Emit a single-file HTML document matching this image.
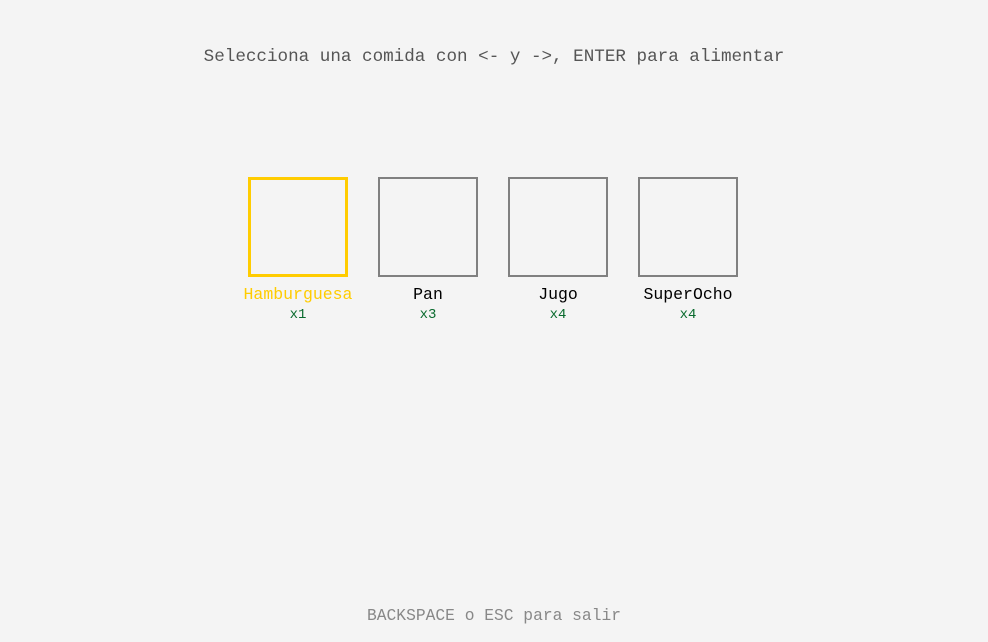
<!DOCTYPE html>
<html><head><style>
body{margin:0;width:988px;height:642px;background:#f4f4f4;position:relative;font-family:"Liberation Mono",monospace;overflow:hidden}
.t{position:absolute;left:0;width:988px;text-align:center;white-space:nowrap}
.box{position:absolute;top:177px;width:100px;height:100px;box-sizing:border-box;border:2px solid #808080}
.lab{position:absolute;top:285px;width:160px;text-align:center;font-size:16.5px;color:#000}
.cnt{position:absolute;top:307px;width:160px;text-align:center;font-size:14px;color:#0a6b2e}
</style></head><body>
<div class="t" style="top:47px;font-size:17.6px;color:#555">Selecciona una comida con &lt;- y -&gt;, ENTER para alimentar</div>
<div class="box" style="left:248px;border:3px solid #ffcc00"></div>
<div class="box" style="left:378px"></div>
<div class="box" style="left:508px"></div>
<div class="box" style="left:638px"></div>
<div class="lab" style="left:218px;color:#ffcc00">Hamburguesa</div>
<div class="lab" style="left:348px">Pan</div>
<div class="lab" style="left:478px">Jugo</div>
<div class="lab" style="left:608px">SuperOcho</div>
<div class="cnt" style="left:218px">x1</div>
<div class="cnt" style="left:348px">x3</div>
<div class="cnt" style="left:478px">x4</div>
<div class="cnt" style="left:608px">x4</div>
<div class="t" style="top:606px;font-size:16.3px;color:#888">BACKSPACE o ESC para salir</div>
</body></html>
